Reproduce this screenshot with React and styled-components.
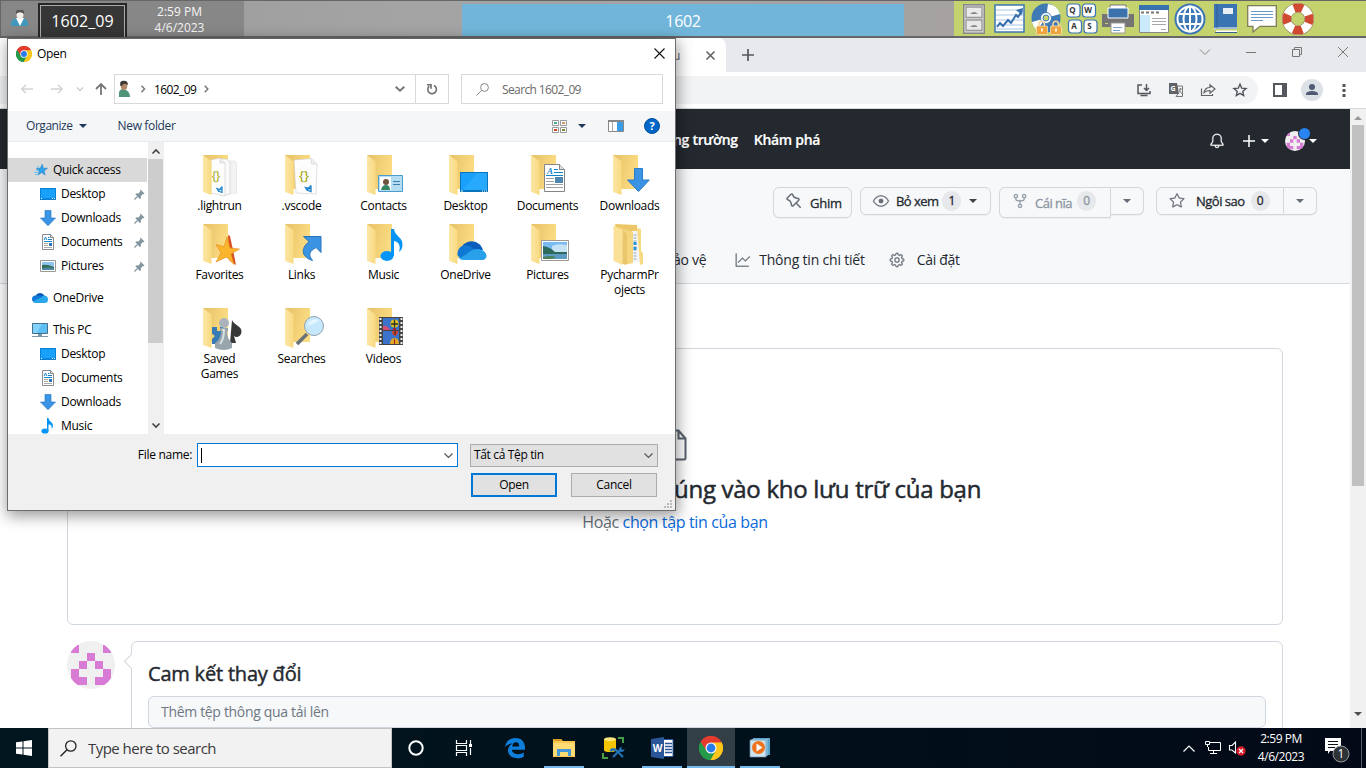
import React from 'react';
import styled, { createGlobalStyle } from 'styled-components';
import { GoBell, GoEye, GoGear, GoGraph, GoRepoForked, GoStar } from 'react-icons/go';

const Global = createGlobalStyle`
  * { box-sizing: border-box; }
  body { margin: 0; overflow: hidden; font-family: "Open Sans", "Noto Sans", sans-serif; }
  svg { display: block; flex: none; overflow: visible; }
`;

const T = styled.span`
  font-size: ${(p) => p.$s || 12}px;
  letter-spacing: ${(p) => p.$ls ?? -0.3}px;
  font-weight: ${(p) => p.$w || 400};
  color: ${(p) => p.$c || '#000'};
  line-height: ${(p) => p.$lh || 15}px;
  white-space: nowrap;
  margin-left: ${(p) => p.$ml || 0}px;
  padding-bottom: ${(p) => p.$pb || 0}px;
  padding-top: ${(p) => p.$pt || 0}px;
  -webkit-text-stroke: ${(p) => p.$bold || 0}px currentColor;
`;
const Gap = styled.div`flex: none; width: ${(p) => p.$w || 0}px; height: ${(p) => p.$h || 0}px;`;

const Desktop = styled.div`
  position: relative; width: 1366px; height: 768px; overflow: hidden;
  display: flex; flex-direction: column; background: #fff;
`;

/* session bar */
const SessionBar = styled.header`
  height: 38px; flex: none; display: flex; background: linear-gradient(90deg, #999, #a4a4a4 30%, #a6a2a2 70%, #a9a9a9);
  border-top: 1px solid #666; border-bottom: 2px solid #666;
`;
const SessionLeft = styled.div`
  width: 244px; display: flex; background: #878787; border-left: 1px solid #666;
`;
const UserCell = styled.div`width: 37px; padding: 8px 0 0 10px;`;
const SessionName = styled.div`
  width: 89px; height: 34px; margin-top: 2px; padding-top: 1px;
  border: 2px solid #262626; border-bottom: 0; outline: 0;
  box-shadow: inset 1px 1px 0 #aaa, inset -1px 0 0 #aaa; background: #363636;
  display: flex; align-items: center; justify-content: center;
`;
const Clock = styled.div`
  width: 105px; display: flex; flex-direction: column; align-items: center; padding-top: 3px;
`;
const SessionTitle = styled.div`
  width: 442px; margin-left: 218px; margin-top: 3px; background: #71b6da;
  display: flex; align-items: center; justify-content: center;
`;
const ToolStrip = styled.div`
  width: 412px; margin-left: auto; height: 35px; background: #c5d36e; padding-left: 9px; display: flex; align-items: center;
`;
const Tool = styled.div`width: ${(p) => p.$w || 36}px; display: flex; justify-content: flex-start;`;

/* browser */
const Browser = styled.main`flex: 1; display: flex; flex-direction: column; min-height: 0;`;
const TabStrip = styled.div`height: 34px; flex: none; display: flex; background: #e8e9ed;`;
const ActiveTab = styled.div`
  width: 726px; background: #fff; border-radius: 0 8px 0 0; display: flex; align-items: center;
  padding-left: 673px;
`;
const NewTab = styled.div`width: 44px; display: flex; align-items: center; justify-content: center;`;
const WinButtons = styled.div`margin-left: auto; display: flex;`;
const WinButton = styled.div`width: 46px; height: 28px; display: flex; align-items: center; justify-content: center;`;
const AddressRow = styled.div`
  height: 37px; flex: none; display: flex; align-items: center; background: #fff; border-bottom: 1px solid #d6d8da; padding-right: 5px;
`;
const Omnibox = styled.div`
  width: 1258px; height: 28px; border-radius: 0 14px 14px 0; background: #f1f3f4;
  display: flex; align-items: center; justify-content: flex-end; padding-right: 2px;
`;
const IconSlot = styled.div`width: ${(p) => p.$w || 32}px; display: flex; align-items: center; justify-content: center;`;
const Round = styled.div`
  width: 22px; height: 22px; border-radius: 50%; background: #dce0e7; display: flex; align-items: center; justify-content: center;
`;
const Viewport = styled.div`flex: 1; display: flex; min-height: 0; overflow: hidden;`;
const Page = styled.div`width: 1350px; display: flex; flex-direction: column; background: #fff;`;
const VScroll = styled.div`
  width: 16px; background: #f1f1f1; display: flex; flex-direction: column; align-items: center; padding: 7px 0 7px;
`;
const VThumb = styled.div`width: 12px; height: 361px; margin-top: 5px; background: #c1c1c1;`;

const RepoNav = styled.div`
  height: 60px; flex: none; background: #24292f; display: flex; align-items: center; padding: 3px 33px 0 673px;
`;
const NavRight = styled.div`margin-left: auto; display: flex; align-items: center;`;
const AvatarBadge = styled.div`position: relative; margin-left: 16px;`;
const Dot = styled.i`
  position: absolute; left: 14px; top: -3px; width: 11px; height: 11px; border-radius: 50%;
  background: #2784f0; box-shadow: 0 0 0 1px #24292f;
`;
const RepoHead = styled.div`height: 115px; flex: none; background: #f6f8fa; border-bottom: 1px solid #d3d8de;`;
const Octicon = styled.div`
  width: 16px; height: 16px; flex: none; color: ${(p) => p.$c || '#656d76'};
  svg { stroke: currentColor; stroke-width: .3px; }
`;
const Actions = styled.div`display: flex; justify-content: flex-end; align-items: flex-start; padding: 18px 33px 0 0; height: 74px;`;
const Btn = styled.div`
  height: ${(p) => (p.$tall ? 31 : 28)}px; width: ${(p) => p.$w}px; margin-left: ${(p) => p.$ml || 0}px; padding: 0 0 ${(p) => (p.$tall ? 3 : 0)}px 12px;
  display: flex; align-items: center; background: #f6f8fa;
  border: 1px solid #d3d6da; box-shadow: 0 1px 0 rgba(27,31,36,.04);
  border-radius: ${(p) => (p.$side === 'l' ? '6px 0 0 6px' : p.$side === 'r' ? '0 6px 6px 0' : '6px')};
  ${(p) => p.$side === 'r' && 'border-left: 0; justify-content: center; padding: 0;'}
`;
const Count = styled.span`
  min-width: 19px; height: 20px; border-radius: 10px; background: #e6e8eb; margin-left: ${(p) => p.$ml || 5}px;
  font-size: 12px; line-height: 19px; text-align: center; color: ${(p) => p.$c || '#24292f'}; -webkit-text-stroke: .3px currentColor;
`;
const Tabs = styled.div`display: flex; align-items: center; height: 34px; padding-left: 673px;`;
const DropZone = styled.section`
  width: 1216px; height: 277px; flex: none; margin: 64px 0 0 67px; border: 1px solid #d0d7de; border-radius: 6px;
  display: flex; flex-direction: column; align-items: center;
`;
const DropTitle = styled.div`width: 100%; padding: 0 0 1px 606px; height: 37px; display: flex; align-items: center;`;
const CommitRow = styled.section`display: flex; margin: 16px 0 0 67px; flex: none;`;
const CommitBox = styled.div`
  position: relative; width: 1152px; height: 140px; margin-left: 16px; border: 1px solid #d0d7de; border-radius: 6px; padding: 18px 16px 0;
  display: flex; flex-direction: column;
`;
const Notch = styled.i`
  position: absolute; left: -6px; top: 14px; width: 11px; height: 11px; background: #fff; transform: rotate(45deg);
  border-left: 1px solid #d0d7de; border-bottom: 1px solid #d0d7de;
`;
const CommitInput = styled.div`
  height: 32px; margin-top: 9px; border: 1px solid #d0d7de; border-radius: 6px; background: #f6f8fa; padding: 0 0 1px 12px; display: flex; align-items: center;
`;

/* open dialog */
const Dialog = styled.div`
  position: absolute; left: 7px; top: 38px; width: 669px; height: 473px; background: #fff; border: 1px solid #6d6d6d; border-top-color: #666;
  box-shadow: 1px 4px 14px 1px rgba(0,0,0,.4); display: flex; flex-direction: column; overflow: visible;
`;
const TitleRow = styled.div`height: 35px; flex: none; display: flex; align-items: center; padding: 0 10px 6px 8px;`;
const NavRow = styled.div`height: 37px; flex: none; display: flex; align-items: flex-start;`;
const NavIcons = styled.div`width: 106px; height: 30px; display: flex; align-items: center; padding-left: 13px;`;
const PathBox = styled.div`
  width: 335px; height: 30px; border: 1px solid #d9d9d9; display: flex; align-items: center; padding-left: 3px;
`;
const Refresh = styled.div`
  width: 33px; height: 28px; border-left: 1px solid #d9d9d9; display: flex; align-items: center; justify-content: center;
`;
const SearchBox = styled.div`
  width: 202px; height: 30px; margin-left: 12px; border: 1px solid #d9d9d9; display: flex; align-items: center; padding-left: 14px;
`;
const CommandBar = styled.div`
  height: 31px; flex: none; background: #f5f6f7; border-bottom: 1px solid #e8eaec; display: flex; align-items: center; padding: 0 15px 0 18px;
`;
const Body = styled.div`height: 292px; flex: none; display: flex;`;
const Tree = styled.div`width: 139px; padding-top: 16px; overflow: hidden;`;
const TreeRow = styled.div`
  height: 24px; margin-top: ${(p) => (p.$gap ? 8 : 0)}px; padding-left: ${(p) => (p.$child ? 32 : 24)}px; padding-right: 2px; display: flex; align-items: center;
  background: ${(p) => (p.$sel ? '#d9d9d9' : 'transparent')};
`;
const TreeName = styled(T)`margin-left: 5px; flex: 1; padding-bottom: 1px;`;
const Bar = styled.div`
  width: 16px; margin-left: 1px; background: #f0f0f0; display: flex; flex-direction: column; align-items: center; padding: 7px 0 6px;
`;
const BarThumb = styled.div`width: 15px; height: 184px; margin-top: 5px; margin-right: 1px; background: #cdcdcd;`;
const Files = styled.div`
  flex: 1; display: grid; grid-template-columns: repeat(6, 82px); grid-template-rows: 69px 84px 90px;
  padding: 13px 0 0 14px;
`;
const File = styled.div`display: flex; flex-direction: column; align-items: center;`;
const FileName = styled(T)`margin-top: -1px; padding-left: 1px; text-align: center; white-space: pre-line;`;
const Foot = styled.div`flex: 1; background: #f0f0f0; display: flex; flex-direction: column; padding: 9px 3px 0 0;`;
const FootRow = styled.div`display: flex; align-items: center; height: 24px; margin-bottom: 6px;`;
const FieldLabel = styled.div`width: 189px; padding-right: 5px; display: flex; justify-content: flex-end;`;
const NameField = styled.div`
  width: 261px; height: 24px; border: 1px solid #0078d7; background: #fff; display: flex; align-items: center; justify-content: space-between; padding: 0 4px 0 3px;
`;
const Caret = styled.i`width: 1px; height: 15px; background: #000;`;
const Filter = styled.div`
  width: 188px; height: 23px; margin-left: 12px; border: 1px solid #adadad; background: #e1e1e1; display: flex; align-items: center; justify-content: space-between; padding: 0 4px 0 3px;
`;
const DlgBtn = styled.div`
  width: 86px; height: 24px; margin-left: ${(p) => p.$ml}px; border: ${(p) => (p.$main ? '2px solid #0078d7' : '1px solid #adadad')}; background: #e1e1e1;
  display: flex; align-items: center; justify-content: center;
`;
const Grip = styled.div`position: absolute; right: 3px; bottom: 2px;`;

/* taskbar */
const Taskbar = styled.footer`height: 40px; flex: none; display: flex; background: linear-gradient(90deg, #02161f, #01101a 60%, #030917);`;
const Start = styled.div`width: 48px; display: flex; align-items: center; justify-content: center;`;
const TaskSearch = styled.div`width: 344px; border: 1px solid #c4c4c4; background: #f2f2f2; display: flex; align-items: center; padding-left: 11px;`;
const Task = styled.div`
  width: ${(p) => p.$w || 48}px; margin-left: ${(p) => p.$ml || 0}px; height: 40px; display: flex; align-items: center; justify-content: center;
  background: ${(p) => (p.$active ? '#323f47' : 'transparent')};
  border-bottom: 2px solid ${(p) => (p.$open ? '#76b9ed' : 'transparent')}; padding-top: 2px;
`;
const Tray = styled.div`margin-left: auto; display: flex; align-items: center;`;
const TrayClock = styled.div`width: 64px; margin-left: 3px; display: flex; flex-direction: column; align-items: center;`;
const ShowDesk = styled.div`width: 5px; height: 40px; border-left: 1px solid #555c66;`;

/* icons */
const S = ({ w, h = w, vb, children, ...r }) => (
  <svg width={w} height={h} viewBox={vb || `0 0 ${w} ${h}`} fill="none" {...r}>{children}</svg>
);
const Line = ({ w, h, d, c = '#666', sw = 1.2, fill = 'none' }) => (
  <S w={w} h={h}><path d={d} stroke={c} strokeWidth={sw} fill={fill} /></S>
);
const Tri = ({ c, w = 8, h = 4 }) => <S w={w} h={h}><path d={`M0 0H${w}L${w / 2} ${h}z`} fill={c} /></S>;

const Chrome = ({ size }) => (
  <S w={size} vb="0 0 48 48">
    <path d="M24 24 3.2 12A24 24 0 0 1 44.8 12z" fill="#ea4335" />
    <path d="M24 24V48A24 24 0 0 1 3.2 12z" fill="#259b4a" />
    <path d="M24 24 44.8 12A24 24 0 0 1 24 48z" fill="#fbc116" />
    <path d="M24 13H45.2A24 24 0 0 0 3.2 12L14 29.5z" fill="#e33b2e" />
    <path d="M3.2 12A24 24 0 0 0 24 48L33.6 29.5 14.5 29.5z" fill="#259b4a" />
    <path d="M45.3 13A24 24 0 0 1 23 48L33.6 29.5 30 15 24 13z" fill="#fcc61b" />
    <circle cx="24" cy="24" r="11" fill="#fff" /><circle cx="24" cy="24" r="8.8" fill="#287be8" />
  </S>
);

const DownArrow = () => (
  <path d="M5 .5h6v7.5h4.5L8 15.7.5 8H5z" fill="#3a94e3" stroke="#2b7cc6" strokeWidth=".7" />
);
const Monitor = () => (
  <><path d="M0 2h16v12H0z" fill="#0b7fd0" /><path d="M1 3h14v9.300H1z" fill="#18a0fb" /><path d="M1 12.500h1M12 12.500h1M14 12.500h1" stroke="#fff" /></>
);
const Doc = () => (
  <><path d="M2.500.5h8l3 3v12h-11z" fill="#fff" stroke="#8d8d8d" /><path d="M10.500.5v3h3" stroke="#8d8d8d" fill="#ddd" />
    <path d="M8 3.500h1.500M8 5.500h4M4 7.500h8" stroke="#1683c7" /><path d="M4 9.500h4M4 11.500h4M4 13.500h8" stroke="#aaa" /><path d="M9 9h3v3H9z" fill="#2d75b4" /><path d="m4 6 1.500-3L7 6" stroke="#1683c7" /></>
);
const Photo = () => (
  <><path d="M.5 2.500h15v11H.5z" fill="#fff" stroke="#999" /><path d="M2 4h12v8H2z" fill="#8fc4f1" /><path d="M2 7q5-1 12 2v3H2z" fill="#356d54" /><path d="M2 10.500q7-2 12 0V12H2z" fill="#4f87a8" /></>
);
const Note = () => (
  <><ellipse cx="5" cy="13" rx="3.600" ry="2.600" fill="#0795f5" /><path d="M7 0h1.500c.5 4 5 4 4.500 8.500-.2 1.300-1 2-1.500 2.500.8-3-.5-4.300-3-4.500v6.500H7z" fill="#0795f5" /></>
);
const Cloud = () => (
  <><path d="M3.500 7a5 5 0 0 1 9-.500L8 10z" fill="#0a5dbb" /><path d="M3.500 6.500Q0 6.500 0 10t4 4l8-4.500-5-2.700q-1.500-.6-3.500-.3z" fill="#0f78d4" /><path d="M9 8.500q1-2 3.500-2 3.500.4 3.500 4t-3.500 3.500H4q-2.500-.2-3-1.500z" fill="#28a8ea" /></>
);
const treeIcons = {
  star: <g transform="translate(2.200 1.500) scale(.85)"><path d="m9.500.8 1.100 4.700 5 .1-4 3 1.300 5-4.100-2.900-4.300 2.800 1.500-4.700-3.500-3 4.700-.1z" fill="#2ca2ec" stroke="#1878c0" strokeWidth=".6" /><path d="M0 10.500h4M1 13h4M2 8h3M3 4h3" stroke="#55b8f2" /></g>,
  desktop: <Monitor />, down: <DownArrow />, doc: <Doc />, pic: <Photo />, music: <Note />, cloud: <g transform="translate(0 -1)"><Cloud /></g>,
  pc: <><path d="M.5 1.500h15v10H.5z" fill="#5cc0f5" stroke="#44708e" /><path d="M1 2h9l-5 9H1z" fill="#82d2fb" /><path d="M6 12h4v2h6v1H0v-1h6z" fill="#7c97a6" /></>,
};

const Pin = () => (
  <S w={11} h={11}><path d="m6.500.5 4 4-1 .8-.7-.2-2 2.200.1 2-.9.9L1.300 5.300l.9-.9 2 .1 2.200-2-.4-1z" fill="#8495a0" /><path d="M3.600 7.400.5 10.500" stroke="#8495a0" strokeWidth="1.300" /></S>
);

const overlays = {
  light: <><path d="M31 6h9l1.500 2v30l-9 1z" fill="#f3f3f3" stroke="#ddd" strokeWidth=".6" /><path d="M25 4h7l3 4v31l-9 2z" fill="#fafafa" stroke="#ccc" strokeWidth=".6" /><path d="m16 5 9-2 5 5v33l-14-3z" fill="#fdfdfd" stroke="#d0d0d0" strokeWidth=".6" /><path d="M25 3v5h5" fill="#eee" stroke="#ccc" strokeWidth=".6" /><text x="17" y="25" fontSize="12" fill="#a9ac24" fontWeight="600" textLength="8" lengthAdjust="spacingAndGlyphs">{'{}'}</text><path d="M27 31.500v6l-4-1.500M27 31.500 23.500 36l-1.500-2.500 5 1.500" stroke="#1b82c9" strokeWidth="1.200" /></>,
  code: <><path d="m17 5 18-1.500 5 5.500-1 30-20-1z" fill="#fdfdfd" stroke="#ccc" strokeWidth=".6" /><path d="M34 3.500 34.500 9h5" fill="#eee" stroke="#ccc" strokeWidth=".6" /><text x="22" y="25" fontSize="13" fill="#a9ac24" fontWeight="600">{'{}'}</text><path d="M34 30.500v6l-4.500-1.500M34 30.500 30 35l-1.500-2.500 5.500 1.500" stroke="#1b82c9" strokeWidth="1.300" /></>,
  contacts: <><path d="M19.500 20.500h24v16h-24z" fill="#b4dcf2" stroke="#4b9cc9" /><path d="M21 22h11v13H21z" fill="#fff" /><circle cx="27" cy="27" r="3" fill="#70533d" /><path d="M22 35q1-5 5-5t4 5z" fill="#358565" /><path d="M34 26.500h7M34 29.500h7" stroke="#3a7fa8" /></>,
  desktop: <><path d="M19 17h28v20H19z" fill="#0874ba" /><path d="M20 18h26v17H20z" fill="#18a0fb" /><path d="M36 18h10v17H22z" fill="#35b2ff" opacity=".5" /><path d="M20 36h2M41 36h1M43 36h1M45 36h1" stroke="#fff" /></>,
  doc: <><path d="M21.500 9.500h15l5 5v22h-20z" fill="#fff" stroke="#858585" /><path d="M36.500 9.500v5h5" fill="#ddd" stroke="#858585" /><text x="24" y="19" fontSize="9" fontWeight="700" fontStyle="italic" fontFamily="Liberation Serif" fill="#1683c7">A</text><path d="M31 14.500h4M31 17.500h9M23 20.500h17" stroke="#1683c7" /><path d="M23 23.500h8M23 26.500h8M23 29.500h17M23 32.500h17" stroke="#a0a0a0" /><path d="M32 22h8v6h-8z" fill="#4b87ae" /></>,
  down: <path d="M29.500 13.500h8V25h6.800L33.500 36.500 22.500 25h7z" fill="#3a94e3" stroke="#2b7cc6" />,
  fav: <><path d="m33 11 2 1 3 14 3 15-7-5z" fill="#d95120" /><path d="m32 13 3 11 9.500 1-8.500 5 3 10.500-7.500-7.500L21 38l5-9-5-8.500 8 2z" fill="#fbb52c" stroke="#e38c1c" strokeWidth=".6" /></>,
  link: <path d="M26.500 12.500h17.500v16l-5-5c-7 4-8 7-3.500 13-10-3-13-11-3.500-19z" fill="#3a94e3" stroke="#2874b9" />,
  music: <><ellipse cx="28" cy="32" rx="6.500" ry="5" fill="#0795f5" /><path d="M32 5h3c.5 7 9 8 8.500 16-.2 4-2 6-3.500 7 2-6 0-10-5-11v15h-3z" fill="#0795f5" /></>,
  cloud: <><path d="M20 25c3-10 18-11 22 1l-10 4z" fill="#0a5dbb" /><path d="M16.500 31c-.5-10 10-13 16-6l8 5-9 6-12-1z" fill="#0f78d4" /><path d="M18 34c8-2 11-10 19-9 10 1 11 11 4 11H23c-3 0-4-1-5-2z" fill="#28a0ea" /></>,
  pic: <><path d="M18.500 16.500h27v20h-27z" fill="#fff" stroke="#999" /><path d="M20 18h24v17H20z" fill="#79baf2" /><path d="M29 22q6-3 15-1v8H29z" fill="#c5e1f5" /><path d="M20 22q7 1 12 6h12v3H20z" fill="#2d6a5c" /><path d="M20 30h24v5H20z" fill="#5a9ac5" /><path d="M20 33q8-2 13 0l-4 2h-9z" fill="#4a8058" /></>,
  pych: <><path d="m10 0 22 1v36l-12 2z" fill="#edc767" /><path d="M27 7h8v31h-8z" fill="#f5f5f5" /><path d="M30 10v27" stroke="#bfcfd9" strokeWidth="3" strokeDasharray="2 1" /><path d="M30 18v8" stroke="#2b91cf" strokeWidth="3" strokeDasharray="3 2" /><path d="m32 4 4 1v22l2 2v11l-3 1z" fill="#f8da82" /><path d="m12 3 16 5v31l-9 2z" fill="#f5d67e" /><path d="m18 6 4 4v30h-5z" fill="#e9c66c" /><path d="m8.500 1 9 6v34l-9-4z" fill="#fbe097" /></>,
  games: <><path d="M17 19h12v17H17z" fill="#367bb5" /><path d="m16 25 4 3-4 4M22 19v4h3v-4" fill="#f4d272" /><path d="M37 12c2 5 10 6 9.500 12-.5 5-5.500 6-7.500 4l2 7h-6z" fill="#383838" /><circle cx="29" cy="15" r="5" fill="#aab4ba" /><path d="M25 20h8v3h-1q0 8 5 12v5q-8 4-17 0v-5q6-4 6-12h-1z" fill="#97a5ad" /><path d="M27 22h2q0 9-4 14" stroke="#d9e1e5" strokeWidth="2" /></>,
  search: <><path d="m30 26-10 10" stroke="#687178" strokeWidth="3.500" /><circle cx="37" cy="18" r="9.500" fill="#c6e8fd" stroke="#90a2b1" /><path d="M30 17q5-8 12-5-4 5-12 5z" fill="#e4f5ff" /></>,
  video: <><path d="M20 9h24v28H20z" fill="#444" /><path d="M21.500 10v27M42.500 10v27" stroke="#eee" strokeWidth="2" strokeDasharray="2 2" /><path d="M24 10h16v12H24zM24 23h16v13H24z" fill="#3a73c9" /><path d="M24 18q4-1 7 4h-7z" fill="#d54f78" /><circle cx="35.500" cy="15.500" r="4" fill="#dfc124" /><path d="M35.500 11.500v8M32 16h7" stroke="#332" strokeWidth="1.300" /><path d="M34 20h3v2h-3z" fill="#923" /><path d="M33 23h6q0 4-3 5-3-1-3-5z" fill="#d93e30" /><path d="M36 23v4" stroke="#222" /><path d="M31 36q0-6 4.500-6t4.500 6z" fill="#e1a929" /><path d="M35.500 31v5" stroke="#a22" /></>,
};

const Folder = ({ kind }) => (
  <S w={48} h={44}>
    <defs>
      <linearGradient id="fb" x2="1" y2=".3"><stop stopColor="#e6c067" /><stop offset="1" stopColor="#fbdc82" /></linearGradient>
      <linearGradient id="ff" x2="1"><stop stopColor="#fbe6a6" /><stop offset="1" stopColor="#f9da80" /></linearGradient>
    </defs>
    {kind !== 'pych' && <path d="M8 0h25v34H16z" fill="url(#fb)" />}
    {(kind === 'code' || kind === 'light') && overlays[kind]}
    {kind !== 'pych' && <path d="m8 0 8.500 6.500V40L8 37z" fill="url(#ff)" />}
    {kind !== 'code' && kind !== 'light' && overlays[kind]}
  </S>
);

const Identicon = ({ size }) => (
  <S w={size} vb="0 0 48 48">
    <clipPath id={`c${size}`}><circle cx="24" cy="24" r="24" /></clipPath>
    <g clipPath={`url(#c${size})`}>
      <path d="M0 0h48v48H0z" fill="#f0f0f0" />
      <path d="M4 4h8v8H4zM36 4h8v8h-8zM20 12h8v8h-8zM12 20h8v8h-8zM28 20h8v8h-8zM4 28h8v8h8v8H4zM44 28h-8v8h-8v8h16z" fill="#d87bd5" />
    </g>
  </S>
);

const files = [
  ['light', '.lightrun'], ['code', '.vscode'], ['contacts', 'Contacts'], ['desktop', 'Desktop'], ['doc', 'Documents'], ['down', 'Downloads'],
  ['fav', 'Favorites'], ['link', 'Links'], ['music', 'Music'], ['cloud', 'OneDrive'], ['pic', 'Pictures'], ['pych', 'PycharmPr\nojects'],
  ['games', 'Saved\nGames'], ['search', 'Searches'], ['video', 'Videos'],
];
const tree = [
  { i: 'star', n: 'Quick access', sel: 1 },
  { i: 'desktop', n: 'Desktop', child: 1, pin: 1 }, { i: 'down', n: 'Downloads', child: 1, pin: 1 },
  { i: 'doc', n: 'Documents', child: 1, pin: 1 }, { i: 'pic', n: 'Pictures', child: 1, pin: 1 },
  { i: 'cloud', n: 'OneDrive', gap: 1 }, { i: 'pc', n: 'This PC', gap: 1 },
  { i: 'desktop', n: 'Desktop', child: 1 }, { i: 'doc', n: 'Documents', child: 1 }, { i: 'down', n: 'Downloads', child: 1 }, { i: 'music', n: 'Music', child: 1 },
];

const Key = ({ x, y, k }) => (
  <><rect x={x} y={y} width="13" height="13" rx="3" fill="#fff" stroke="#3a74b0" strokeWidth="1.200" /><text x={x + 5.500} y={y + 9} fontSize="8" fontWeight="700" textAnchor="middle" fill="#333">{k}</text></>
);
const Lock = ({ x }) => (
  <><path d={`M${x + 2.500} 24v-3a2.700 2.700 0 0 1 5.400 0v3`} stroke="#f4d5a0" strokeWidth="1.600" /><rect x={x} y="23" width="11" height="8.500" rx="1" fill="#efa43e" stroke="#fbe7c4" strokeWidth=".7" /><path d={`M${x + 5.500} 25.500v3`} stroke="#fff" strokeWidth="1.600" /></>
);

function SessionTools() {
  return (
    <ToolStrip>
      <Tool $w={31}><S w={22} h={30}><path d="M.7.700h20.600v28.600H.7z" fill="#ddd" stroke="#888" strokeWidth="1.400" /><path d="M3 3h16v10.500H3zM3 16h16v10.500H3z" fill="#e9e9e9" stroke="#999" strokeWidth="1.300" /><path d="M7 10q4-4 8 0zM7 23q4-4 8 0z" fill="#888" /></S></Tool>
      <Tool $w={37}><S w={31} h={29}><path d="M1 1h29v27H1z" fill="#fff" stroke="#3c77b4" strokeWidth="1.500" /><path d="M2 6h27M2 11h27M2 16h27M2 21h27M2 25h27" stroke="#a8c7e6" /><path d="m3 23 3-4 3 3 5-6 3 3 5-8 2 2 4-6" stroke="#376fac" strokeWidth="2" /><path d="m22 6 7-2-1 7z" fill="#376fac" /></S></Tool>
      <Tool $w={35}><S w={32} h={32}><circle cx="15" cy="15" r="14.500" fill="#3f7ab5" /><path d="M15 15 17 1a14 14 0 0 1 12 10zM15 15 1 19a14 14 0 0 0 5 8z" fill="#fff" /><circle cx="15" cy="15" r="5.500" fill="#fff" stroke="#3f7ab5" /><circle cx="15" cy="15" r="3" fill="#c5d36e" stroke="#3f7ab5" /><Lock x={5.500} /><Lock x={19.500} /></S></Tool>
      <Tool $w={36}><S w={30} h={31}><Key x={1} y={1} k="Q" /><Key x={16.500} y={1} k="W" /><Key x={2.500} y={17} k="A" /><Key x={18} y={17} k="S" /></S></Tool>
      <Tool $w={37}><S w={32} h={30}><path d="M8 1h16v9H8z" fill="#fff" stroke="#777" /><path d="M0 10h32v13H0z" fill="#757575" /><path d="M6 4h20v10H6z" fill="#3c72ac" stroke="#fff" /><path d="M9 19h14v10H9z" fill="#fff" stroke="#999" /><path d="M11 23.500h9M11 26.500h7" stroke="#7ca4cf" /><path d="M3 19.500h3" stroke="#c5d36e" /></S></Tool>
      <Tool $w={35}><S w={30} h={28}><path d="M.5.500h29v27H.5z" fill="#fff" stroke="#888" /><path d="M0 0h30v5H0z" fill="#3872ae" /><path d="M2 7.500h20" stroke="#777" strokeWidth="2" strokeDasharray="3 2" /><path d="M1 10h10v17H1z" fill="#cbeafb" /><path d="M13 13.500h14M13 16.500h14M13 19.500h14M22 24.500h5" stroke="#aaa" /></S></Tool>
      <Tool $w={39}><S w={32} h={32}><circle cx="16" cy="16" r="15.500" fill="#3c77b5" /><circle cx="16" cy="16" r="12.500" stroke="#fff" strokeWidth="2" fill="#3c77b5" /><path d="M4 11h24M4 21h24M16 3v26" stroke="#fff" strokeWidth="2" /><ellipse cx="16" cy="16" rx="6.500" ry="12.500" stroke="#fff" strokeWidth="2" /></S></Tool>
      <Tool $w={34}><S w={25} h={29}><path d="M1 0h23v25H3q-2 0-2 2z" fill="#3a74b3" /><path d="M1 26q0-2 2-2h21" stroke="#fff" /><path d="M3 27.500h21" stroke="#fff" strokeWidth="2" /><path d="M2 28.500h22M4 0v24" stroke="#315f96" /><path d="M10 4h10v6H10z" fill="#e8eff6" /></S></Tool>
      <Tool $w={35}><S w={30} h={28}><path d="M.7.700h28.600v20.600H13L6 27v-5.700H.7z" fill="#fff" stroke="#807b58" strokeWidth="1.300" /><path d="M4 6.500h22M4 9.500h22M4 12.500h22M4 15.500h12" stroke="#6a9aca" /></S></Tool>
      <Tool $w={36}><S w={32} h={32}><circle cx="16" cy="16" r="11.300" stroke="#8b7c56" strokeWidth="9.600" /><circle cx="16" cy="16" r="11.300" stroke="#fff" strokeWidth="8.500" /><circle cx="16" cy="16" r="11.300" stroke="#cf4a30" strokeWidth="8.500" strokeDasharray="8.875" strokeDashoffset="4.400" /></S></Tool>
    </ToolStrip>
  );
}

const GhPin = () => (
  <S w={16}><path fill="#656d76" fillRule="evenodd" d="M4.456.734a1.75 1.75 0 012.826.504l.613 1.327a3.081 3.081 0 002.084 1.707l2.454.584c1.332.317 1.800 1.972.832 2.940L11.060 10l3.720 3.720a.75.75 0 11-1.061 1.060L10 11.060l-2.204 2.205c-.968.968-2.623.5-2.940-.832l-.584-2.454a3.081 3.081 0 00-1.707-2.084l-1.327-.613a1.750 1.750 0 01-.504-2.826L4.456.734zM5.920 1.866a.25.25 0 00-.404-.072L1.794 5.516a.25.25 0 00.072.404l1.328.613A4.582 4.582 0 015.730 9.630l.584 2.454a.25.25 0 00.42.12l5.470-5.470a.25.25 0 00-.12-.42L9.630 5.730a4.581 4.581 0 01-3.098-2.537L5.920 1.866z" /></S>
);

function BrowserWindow() {
  return (
    <Browser>
      <TabStrip>
        <ActiveTab><T $c="#5f6368" $s={12}>u</T><Gap $w={26} /><Line w={9} h={9} d="m.5.500 8 8m0-8-8 8" c="#5f6368" sw={1.600} /></ActiveTab>
        <NewTab><Line w={12} h={12} d="M6 0v12M0 6h12" c="#55585d" sw={1.700} /></NewTab>
        <WinButtons>
          <WinButton><Line w={10} h={6} d="m0 .5 5 5 5-5" c="#888" sw={1} /></WinButton>
          <WinButton><Line w={10} h={1} d="M0 .5h10" c="#777" sw={1} /></WinButton>
          <WinButton><Line w={10} h={10} d="M.5 2.500h7v7h-7zM2.500 2.500v-2h7v7h-2" c="#777" sw={1} /></WinButton>
          <WinButton><Line w={10} h={10} d="m0 0 10 10M10 0 0 10" c="#777" sw={1} /></WinButton>
        </WinButtons>
      </TabStrip>
      <AddressRow>
        <Omnibox>
          <IconSlot><S w={14}><path d="M5 2H1v8.500h12V8M3.500 12.500h7M9.500 1v6.500M7 5l2.500 2.500L12 5" stroke="#54575c" strokeWidth="1.500" /></S></IconSlot>
          <IconSlot><S w={14}><path d="M0 0h8l2 11H0z" fill="#5f6368" /><path d="M8 3h5.500v10.500H7l2-2.500" stroke="#777" /><text x="1.500" y="8" fontSize="7" fontWeight="700" fill="#fff">G</text><path d="M9.500 6h4M11.500 5v1q-.5 3-2 4M10 7l3 4" stroke="#777" strokeWidth=".8" /></S></IconSlot>
          <IconSlot><S w={16}><path d="M1.500 6.500v7h11V12M4 10.500q1-5 6-5V2.800L15 7l-5 4.200V8.500q-4 0-6 2z" stroke="#5f6368" strokeWidth="1.200" /></S></IconSlot>
          <IconSlot><S w={14}><path d="m7 1.200 1.700 4 4.300.4-3.300 2.800 1 4.200L7 10.400l-3.700 2.200 1-4.200L1 5.600l4.300-.4z" stroke="#50545a" strokeWidth="1.400" /></S></IconSlot>
        </Omnibox>
        <Gap $w={6} />
        <IconSlot><S w={14}><path d="M1 1h12v12H1z" stroke="#54575c" strokeWidth="2" /><path d="M9 1h4v12H9z" fill="#54575c" /></S></IconSlot>
        <IconSlot><Round><S w={14}><circle cx="7" cy="4" r="3" fill="#4f5b73" /><path d="M1 12V10.500Q2 8 7 8t6 2.500V12z" fill="#4f5b73" /></S></Round></IconSlot>
        <IconSlot><S w={4} h={14}><path d="M.5 1h3v3h-3zM.5 6h3v3h-3zM.5 11h3v3h-3z" fill="#54575c" /></S></IconSlot>
      </AddressRow>
      <Viewport>
        <Page>
          <RepoNav>
            <T $s={14} $w={600} $bold={0.2} $c="#fff" $ls={-0.3} $lh={20} $pb={2}>ng trường</T><T $s={14} $w={600} $bold={0.2} $c="#fff" $ls={-0.3} $lh={20} $ml={16} $pb={2}>Khám phá</T>
            <NavRight>
              <Octicon $c="#fff"><GoBell size={16} /></Octicon>
              <Gap $w={18} /><Line w={12} h={12} d="M6 0v12M0 6h12" c="#fff" sw={1.500} /><Gap $w={6} /><Tri c="#fff" />
              <AvatarBadge><Identicon size={20} /><Dot /></AvatarBadge><Gap $w={4} /><Tri c="#fff" />
            </NavRight>
          </RepoNav>
          <RepoHead>
            <Actions>
              <Btn $w={79} $tall><GhPin /><T $ml={8} $s={13} $bold={0.3} $c="#24292f" $ls={-0.2} $pt={5}>Ghim</T></Btn>
              <Btn $w={131} $ml={8}><Octicon><GoEye size={16} /></Octicon><T $ml={7} $s={13} $bold={0.3} $c="#24292f" $ls={-0.55}>Bỏ xem</T><Count $ml={4}>1</Count><Gap $w={8} /><Tri c="#3c4248" /></Btn>
              <Btn $w={112} $tall $ml={8} $side="l"><Octicon $c="#8c959f"><GoRepoForked size={16} /></Octicon><T $ml={7} $s={13} $bold={0.3} $c="#8c959f" $ls={-0.5} $pt={5}>Cái nĩa</T><Count $c="#8c959f">0</Count></Btn>
              <Btn $w={33} $side="r"><Tri c="#656d76" /></Btn>
              <Btn $w={128} $ml={12} $side="l"><Octicon><GoStar size={16} /></Octicon><T $ml={11} $s={13} $bold={0.3} $c="#24292f" $ls={-0.5}>Ngôi sao</T><Count $ml={6}>0</Count></Btn>
              <Btn $w={33} $side="r"><Tri c="#656d76" /></Btn>
            </Actions>
            <Tabs>
              <T $s={14} $c="#24292f" $ls={-0.3} $lh={20}>ảo vệ</T><Gap $w={29} />
              <Octicon><GoGraph size={16} /></Octicon>
              <T $ml={8} $s={14} $c="#24292f" $ls={-0.2} $lh={20}>Thông tin chi tiết</T><Gap $w={24} />
              <Octicon><GoGear size={16} /></Octicon>
              <T $ml={12} $s={14} $c="#24292f" $ls={-0.3} $lh={20}>Cài đặt</T>
            </Tabs>
          </RepoHead>
          <DropZone>
            <Gap $h={80} />
            <S w={24} h={32}><path d="M1.500 3q0-1.500 1.500-1.500h12.500l7 8V29q0 1.500-1.500 1.500H3Q1.500 30.500 1.500 29zM15.500 1.500v8h7" stroke="#59636e" strokeWidth="2" /></S>
            <Gap $h={10} />
            <DropTitle><T $s={24} $bold={0.5} $c="#24292f" $ls={-0.28} $lh={36}>úng vào kho lưu trữ của bạn</T></DropTitle>
            <T $s={16} $c="#656d76" $ls={-0.36} $lh={28}>Hoặc <T $s={16} $c="#0969da" $ls={-0.36} $lh={28}>chọn tập tin của bạn</T></T>
          </DropZone>
          <CommitRow>
            <Identicon size={48} />
            <CommitBox><Notch /><T $s={20} $bold={0.45} $c="#24292f" $ls={-0.2} $lh={27}>Cam kết thay đổi</T><CommitInput><T $s={14} $c="#6e7781" $ls={-0.32}>Thêm tệp thông qua tải lên</T></CommitInput></CommitBox>
          </CommitRow>
        </Page>
        <VScroll><S w={8} h={4}><path d="M0 4h8L4 0z" fill="#999" /></S><VThumb /><Gap $h={226} /><Tri c="#505050" /></VScroll>
      </Viewport>
    </Browser>
  );
}

function OpenDialog() {
  return (
    <Dialog>
      <TitleRow><Chrome size={16} /><T $ml={5} $pb={1}>Open</T><NavRight><Line w={11} h={11} d="m.5.500 10 10m0-10-10 10" c="#111" sw={1.100} /></NavRight></TitleRow>
      <NavRow>
        <NavIcons>
          <Line w={12} h={10} d="M12 5H1M5 .8.800 5 5 9.200" c="#d4d4d4" sw={1.500} /><Gap $w={18} />
          <Line w={12} h={10} d="M0 5h11M7 .8 11.200 5 7 9.200" c="#d4d4d4" sw={1.500} /><Gap $w={14} />
          <Line w={6} h={4} d="m0 .5 3 3 3-3" c="#ccc" sw={1.300} /><Gap $w={12} />
          <Line w={12} h={12} d="M6 12V1M1 6l5-5 5 5" c="#777" sw={1.800} />
        </NavIcons>
        <PathBox>
          <S w={14} h={18}><path d="M1 17V13Q1 10 4 9l4 1q4 2 4 7z" fill="#4d9478" /><ellipse cx="6" cy="5.500" rx="3.300" ry="4.500" fill="#b18868" /><path d="M2.500 6Q1 1 5 .8q5-.5 5 4.200-3-2-4.500-1L3.500 6z" fill="#3d3936" /></S>
          <Gap $w={9} /><Line w={4} h={8} d="m.5.800 3 3.200-3 3.200" c="#777" sw={1.500} /><T $ml={9} $ls={-0.6}>1602_09</T><Gap $w={8} /><Line w={5} h={8} d="m.8.800 3 3.200-3 3.200" c="#777" sw={1.500} />
          <NavRight><Line w={10} h={6} d="m.7.700 4.300 4 4.300-4" c="#777" sw={2} /><Gap $w={10} /><Refresh><S w={12}><path d="M8 2.500A4.300 4.300 0 1 1 3.200 3.200M1 1.700h4v4" stroke="#707070" strokeWidth="1.600" /></S></Refresh></NavRight>
        </PathBox>
        <SearchBox><S w={13} h={13}><circle cx="8.500" cy="4.500" r="3.900" stroke="#888" /><path d="M5.700 7.300.5 12.500" stroke="#888" /></S><T $ml={13} $c="#6a6a6a" $ls={-0.62}>Search 1602_09</T></SearchBox>
      </NavRow>
      <CommandBar>
        <T $c="#1e395b" $ls={-0.45} $pb={1}>Organize</T><Gap $w={6} /><Tri c="#1e395b" /><T $c="#1e395b" $ml={31} $ls={-0.35} $pb={1}>New folder</T>
        <NavRight>
          <S w={15} h={13}><path d="M.5.500h6v5h-6zM8.500.5h6v5h-6zM.5 7.500h6v5h-6zM8.500 7.500h6v5h-6z" fill="#fff" stroke="#999" /><path d="M2 3h3" stroke="#4a9" strokeWidth="2" /><path d="M10 3h3" stroke="#c96" strokeWidth="2" /><path d="M2 10h3" stroke="#c42" strokeWidth="2" /><path d="M10 10h3" stroke="#783" strokeWidth="2" /></S>
          <Gap $w={11} /><Tri c="#1e395b" /><Gap $w={22} />
          <S w={16} h={12}><path d="M.5.500h15v11H.5z" fill="#fff" stroke="#888" /><path d="M0 0h16v2H0z" fill="#888" /><path d="M4.500 2v9" stroke="#aaa" /><path d="M9 2h6v9H9z" fill="#3a9be6" /></S>
          <Gap $w={20} />
          <S w={16}><circle cx="8" cy="8" r="7.500" fill="#0067c8" stroke="#00509c" /><text x="8" y="12" fontSize="11" fontWeight="700" textAnchor="middle" fill="#fff">?</text></S>
        </NavRight>
      </CommandBar>
      <Body>
        <Tree>
          {tree.map((t, k) => (
            <TreeRow key={k} $sel={t.sel} $child={t.child} $gap={t.gap}><S w={16}>{treeIcons[t.i]}</S><TreeName>{t.n}</TreeName>{t.pin && <Pin />}</TreeRow>
          ))}
        </Tree>
        <Bar><Line w={8} h={5} d="m.5 4.500 3.500-3.500 3.500 3.500" c="#444" sw={1.600} /><BarThumb /><Gap $h={80} /><Line w={8} h={5} d="m.5.500 3.500 3.500L7.500.5" c="#444" sw={1.600} /></Bar>
        <Files>{files.map(([k, n]) => <File key={n}><Folder kind={k} /><FileName>{n}</FileName></File>)}</Files>
      </Body>
      <Foot>
        <FootRow><FieldLabel><T $pb={2}>File name:</T></FieldLabel><NameField><Caret /><Line w={9} h={5} d="m.5.500 4 4 4-4" c="#555" /></NameField><Filter><T $ls={-0.35} $pb={2}>Tất cả Tệp tin</T><Line w={9} h={5} d="m.5.500 4 4 4-4" c="#555" /></Filter></FootRow>
        <FootRow><DlgBtn $main $ml={463}><T $pb={1}>Open</T></DlgBtn><DlgBtn $ml={14}><T $pb={1}>Cancel</T></DlgBtn></FootRow>
      </Foot>
      <Grip><S w={8}><path d="M6 0h2v2H6zM3 3h2v2H3zM6 3h2v2H6zM0 6h2v2H0zM3 6h2v2H3zM6 6h2v2H6z" fill="#bbb" /></S></Grip>
    </Dialog>
  );
}

function TaskBar() {
  return (
    <Taskbar>
      <Start><S w={16}><path d="M0 2.300 6.500 1.400v6.200H0zM7.500 1.200 16 0v7.600H7.500zM0 8.500h6.500v6.100L0 13.700zM7.500 8.500H16V16l-8.500-1.200z" fill="#fff" /></S></Start>
      <TaskSearch><S w={17} h={17}><circle cx="10.800" cy="6" r="5.200" stroke="#222" strokeWidth="1.300" /><path d="M7 9.800.5 16.300" stroke="#222" strokeWidth="1.400" /></S><T $ml={11} $s={15} $c="#3a3a3a" $ls={-0.53} $lh={20}>Type here to search</T></TaskSearch>
      <Task><S w={16}><circle cx="8" cy="8" r="6.700" stroke="#fff" strokeWidth="2" /></S></Task>
      <Task><S w={16}><path d="M.5 0v3.500h10V0M.5 16v-3.500h10V16M.5 5.500h10v5H.5zM14.500 0v4M14.500 8v7" stroke="#fff" strokeWidth="1.200" /><path d="M13 4h3v3h-3z" fill="#fff" /></S></Task>
      <Task $ml={3}><S w={20} vb="0 0 20 20"><path d="M0 8.800C1 3 5 0 10.500 0 16.500 0 20 4.200 20 9.600v2.200H7c0 3 3 4.400 6 4.400 2.200 0 4.200-.6 5.800-1.600v4.200c-2 1-4 1.500-6.500 1.500C6.800 20.300 3 17 3 12.600 3 9.600 4.600 7 7.500 5.600 4.500 5.700 1.700 7 0 8.800zM7.200 8.400h7c0-2.600-1-4.100-3.200-4.100-2.300 0-3.500 1.700-3.800 4.100z" fill="#0f7fdc" /></S></Task>
      <Task $w={40} $ml={5} $open><S w={22} h={18}><path d="M0 0h8l2 2h12v16H0z" fill="#fbc74c" /><path d="M0 0h8l1 2H1z" fill="#d89a25" /><path d="M0 4h22v13H0z" fill="#ffdb76" /><path d="M4 17V10h14v7h-3v-4H7v4z" fill="#4798d8" /></S></Task>
      <Task $ml={5}><S w={24} h={22}><path d="M3 2v11q0 2 6 2t6-2V2z" fill="#f5c400" /><ellipse cx="9" cy="2.200" rx="6" ry="2" fill="#ffe67c" /><path d="M17 1h5v5M2 16v5h5" stroke="#45a049" strokeWidth="2" /><path d="m12 20 8-8M14 12l8 8" stroke="#2374b8" strokeWidth="2" /><path d="M8.500 13.500q1-3 4.500-2.500l2 2-2 1.500-1-1-1.500 1.500zM18 13q0-3 3-3.500l-1 2 2 1.500 1.500-1.500q0 4-4 3.500z" fill="#2374b8" /></S></Task>
      <Task $w={40} $ml={5} $open><S w={22} h={22}><path d="M12 2.500h10v17H12z" fill="#fff" stroke="#2b579a" /><path d="M14 6.500h7M14 9.500h7M14 12.500h7M14 15.500h7" stroke="#2b579a" strokeWidth="1.300" /><path d="m0 2 13-2v22L0 20z" fill="#2b579a" /><text x="6.500" y="15" textAnchor="middle" fontWeight="700" fontSize="10" fill="#fff">W</text></S></Task>
      <Task $ml={5} $active $open><Chrome size={24} /></Task>
      <Task $w={40} $ml={5} $open><S w={20}><path d="M3 0h17v17H3z" fill="#5ba4c9" /><path d="M1.500 1h16v17h-16z" fill="#8cc8e5" /><path d="M0 2h16v17H0z" fill="#cfe3ee" stroke="#6293af" strokeWidth=".7" /><circle cx="8.500" cy="9.500" r="6.500" fill="#ee731c" /><path d="M6.500 5.500v8l6-4z" fill="#fff" /></S></Task>
      <Tray>
        <Line w={12} h={7} d="m.5 6.500 5.500-5.500 5.500 5.500" c="#fff" sw={1.200} /><Gap $w={10} />
        <S w={16} h={14}><path d="M5 1.500h10.500v8H3.500V6M8.500 9.500v3M5 12.500h7M.5.500h4v3h-4zM2.500 3.500V6" stroke="#fff" /></S><Gap $w={8} />
        <S w={17} h={15}><path d="M.5 4.500H3L6.500 1v11L3 9H.5z" stroke="#fff" strokeWidth="1.100" /><circle cx="12" cy="10" r="4.700" fill="#d81e2c" /><path d="m10 8 4 4m0-4-4 4" stroke="#fff" strokeWidth="1.200" /></S>
        <TrayClock><T $c="#fff" $lh={18} $ls={-0.45}>2:59 PM</T><T $c="#fff" $lh={18} $ls={-0.45}>4/6/2023</T></TrayClock>
        <Gap $w={5} />
        <S w={31} h={26}><path d="M8 2h16v13H13l-2 3v-3H8z" fill="#fff" transform="translate(-1 1)" /><path d="M10 6.500h10M10 9.500h10M10 12.500h7" stroke="#111" /><circle cx="23" cy="19" r="8" fill="#2e3338" stroke="#999" /><text x="23" y="23" fontSize="12" textAnchor="middle" fill="#fff">1</text></S>
        <Gap $w={12} /><ShowDesk />
      </Tray>
    </Taskbar>
  );
}

export default function App() {
  return (
    <Desktop>
      <Global />
      <SessionBar>
        <SessionLeft>
          <UserCell><S w={18} h={18}><path d="M0 17v-3q0-4 6-5h6q5 1 5 5v3z" fill="#4298bd" /><path d="m5 9 4 8 4-8z" fill="#fff" /><ellipse cx="9" cy="5.500" rx="3.500" ry="5" fill="#f4eee8" /><path d="M5 5Q4 .500 9 .5T13 5Q9 1.500 5 5z" fill="#555" /></S></UserCell>
          <SessionName><T $s={16} $c="#fff" $ls={0.1} $lh={22} $pb={1}>1602_09</T></SessionName>
          <Clock><T $c="#f4f4f4" $lh={16} $ls={0}>2:59 PM</T><T $c="#f4f4f4" $lh={16} $ls={0}>4/6/2023</T></Clock>
        </SessionLeft>
        <SessionTitle><T $s={16} $c="#fff" $ls={-0.3} $lh={22} $pt={2}>1602</T></SessionTitle>
        <SessionTools />
      </SessionBar>
      <BrowserWindow />
      <OpenDialog />
      <TaskBar />
    </Desktop>
  );
}
